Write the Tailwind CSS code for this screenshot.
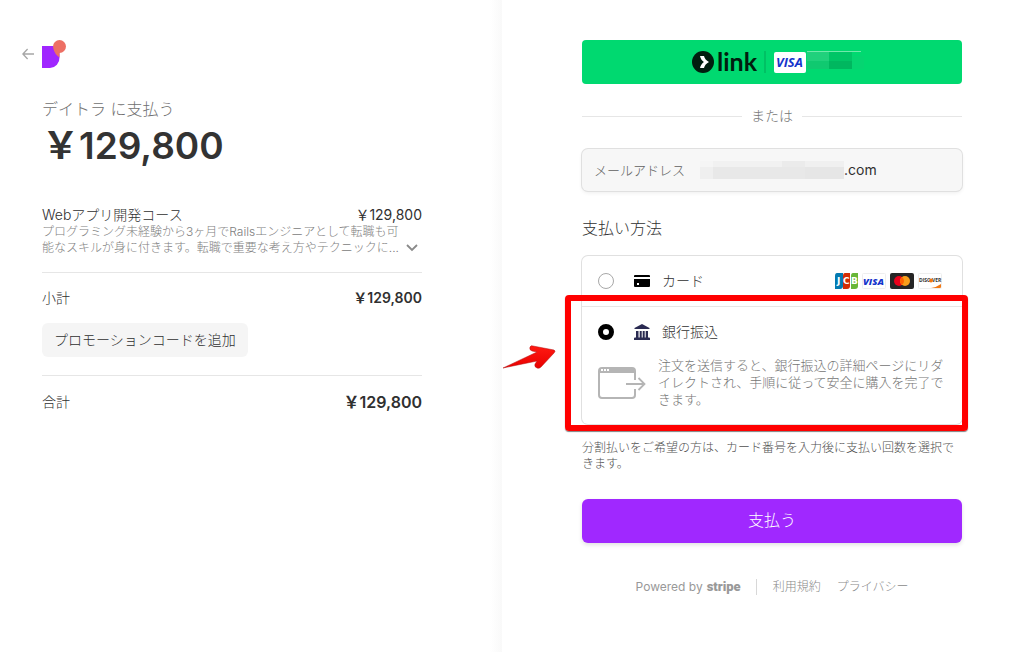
<!DOCTYPE html>
<html lang="ja">
<head>
    <meta charset="UTF-8">
    <meta name="viewport" content="width=device-width, initial-scale=1.0">
    <title>デイトラ に支払う</title>
    <script src="https://cdn.jsdelivr.net/npm/@tailwindcss/browser@4"></script>
</head>
<body class="bg-white font-['Inter','Noto_Sans_CJK_JP',sans-serif] text-[#303030]">
<main class="grid min-h-screen grid-cols-[502fr_515fr]">

    <!-- Order summary -->
    <section class="flex justify-end bg-linear-to-l from-[#f9f9f9] to-white to-[12px] pt-10 pr-20">
        <div class="w-full max-w-[380px]">
            <header class="-ml-5 flex h-7 items-center gap-2">
                <a href="#" aria-label="戻る">
                    <svg class="h-3 w-3" viewBox="0 0 12 12" fill="none" stroke="#a6a6a6" stroke-width="1.3"><path d="M12 6H1M5.6 1L.9 6l4.7 5"/></svg>
                </a>
                <svg class="h-7 w-6" viewBox="0 0 24 28">
                    <path d="M0 6h17.5v11.5A10 10 0 0 1 8 28H0z" fill="#a026ff"/>
                    <circle cx="17.5" cy="6.5" r="6.5" fill="#ed6f64"/>
                    <path d="M11.500 9Q12.500 14 17.500 17.500V12z" fill="#ed6f64"/>
                </svg>
            </header>

            <h1 class="mt-7 text-base leading-[26px] font-light text-[#6f6f6f]">デイトラ に支払う</h1>
            <p class="text-[37px] leading-12 font-semibold text-[#333]">&#65509;129,800</p>

            <div class="mt-[37px] flex justify-between text-sm leading-4">
                <h2 class="font-light">Webアプリ開発コース</h2>
                <span>&#65509;129,800</span>
            </div>
            <div class="mt-px flex items-end justify-between text-xs leading-4 font-light text-[#808080]">
                <p class="w-[358px] whitespace-nowrap">プログラミング未経験から3ヶ月でRailsエンジニアとして転職も可<br>能なスキルが身に付きます。転職で重要な考え方やテクニックに...</p>
                <button type="button" class="flex h-4 w-5 items-center justify-center" aria-label="詳細を表示">
                    <svg class="h-2 w-3" viewBox="0 0 12 8" fill="none" stroke="#8a8a8a" stroke-width="1.800"><path d="M1 1l5 5 5-5"/></svg>
                </button>
            </div>

            <hr class="mt-4 border-[#e6e6e6]">
            <div class="mt-[15px] flex justify-between text-sm leading-5">
                <span class="font-light">小計</span>
                <span class="font-semibold">&#65509;129,800</span>
            </div>
            <button type="button" class="mt-[15px] rounded-md bg-[#f5f5f5] px-3 py-2 text-sm leading-[18px] font-light">プロモーションコードを追加</button>
            <hr class="mt-[18px] border-[#e6e6e6]">
            <div class="mt-4 flex items-center justify-between leading-5">
                <span class="text-sm leading-5 font-light">合計</span>
                <span class="text-base leading-5 font-semibold">&#65509;129,800</span>
            </div>
        </div>
    </section>

    <!-- Payment form -->
    <form class="pt-10 pl-20">
        <div class="w-full max-w-[380px]">
            <button type="button" class="flex h-11 w-full items-center justify-center rounded bg-[#00d970]" aria-label="link で支払う">
                <svg class="ml-3 h-10 w-[172px]" viewBox="0 -9 172 40">
                    <circle cx="11" cy="11" r="11" fill="#011e0f"/>
                    <path d="M8 5h4c.6 2.600 2.300 4.600 5 6-2.700 1.400-4.400 3.400-5 6H8c.5-2.500 1.800-4.500 3.900-6C9.800 9.500 8.500 7.500 8 5z" fill="#fff"/>
                    <text x="25" y="20" font-family="Lato" font-weight="700" font-size="25" fill="#011e0f">link</text>
                    <path d="M73 0v22" stroke="#00c164" stroke-width="2"/>
                    <rect x="82" y="1" width="32" height="21" rx="2" fill="#fff"/>
                    <text x="84" y="16" font-family="Open Sans" font-weight="700" font-style="italic" font-size="13" fill="#1434cb">VISA</text>
                    <path d="M115 1h23v9h-23z" fill="#20d17c"/><path d="M115 10h22v8h-22z" fill="#10c970"/>
                    <path d="M137 1h23v9h-23z" fill="#00c566"/><path d="M137 10h23v8h-23z" fill="#00b75f"/>
                    <path d="M160 5h12v13h-12z" fill="#05d571"/><path d="M115 .5h54" stroke="#70e8ab"/>
                </svg>
            </button>

            <div class="mt-5 flex items-center gap-[9px] text-sm leading-6 font-light text-[#757575]">
                <hr class="flex-1 border-[#e6e6e6]">または<hr class="flex-1 border-[#e6e6e6]">
            </div>

            <div class="mt-[21px] flex h-[42px] items-center rounded-md bg-[#f7f7f7] px-3 shadow-[0_0_0_1px_#e0e0e0,0_2px_4px_rgba(0,0,0,0.07)]">
                <label for="email" class="w-[106px] text-[13px] leading-5 font-light text-[#606060]">メールアドレス</label>
                <svg class="h-[18px] w-36" viewBox="0 0 144 18">
                    <path d="M0 0h13v6H0z" fill="#f5f5f5"/><path d="M0 6h13v12H0z" fill="#efefef"/>
                    <path d="M13 0h69v6H13z" fill="#f1f1f1"/><path d="M82 0h23v6H82z" fill="#ebebeb"/><path d="M105 0h39v6h-39z" fill="#f0f0f0"/>
                    <path d="M13 6h92v12H13z" fill="#e8e8e8"/><path d="M105 6h39v12h-39z" fill="#e6e6e6"/>
                </svg>
                <input id="email" type="text" value=".com" class="min-w-0 flex-1 bg-transparent text-sm leading-5">
            </div>

            <h2 class="mt-[25px] text-base leading-6 font-light">支払い方法</h2>

            <div class="relative mt-4 rounded-md shadow-[0_0_0_1px_#e0e0e0]">
                <div class="flex h-[50px] items-center px-4">
                    <input id="card" type="radio" name="method" class="h-4 w-4 appearance-none rounded-full border border-[#a8a8a8] checked:border-[5px] checked:border-black">
                    <label for="card" class="ml-5 flex flex-1 items-center gap-3 text-sm leading-5 font-light">
                        <svg class="h-3 w-4" viewBox="0 0 16 12"><path d="M1 0h14q1 0 1 1v1H0V1q0-1 1-1zM0 4h16v7q0 1-1 1H1q-1 0-1-1z"/><path d="M3 8h2v2H3z" fill="#fff"/></svg>
                        カード
                    </label>
                    <svg class="mr-1 h-4 w-[107px]" viewBox="0 0 107 16">
                        <path d="M2 0h6v13q0 3-3 3H0V3q0-3 2-3z" fill="#047ab1"/>
                        <path d="M10 0h5v13q0 3-3 3H8V3q0-3 2-3z" fill="#d42d06"/>
                        <path d="M18 0h5v13q0 3-3 3h-4V3q0-3 2-3z" fill="#67b637"/>
                        <g font-family="DejaVu Sans" font-weight="700" font-size="9" fill="#fff"><text x="2" y="11">J</text><text x="8" y="11">C</text><text x="16" y="11">B</text></g>
                        <rect x="27.500" y=".5" width="23" height="15" rx="1" fill="#fff" stroke="#eee"/>
                        <text x="28" y="11.500" font-family="Open Sans" font-weight="800" font-style="italic" font-size="9.500" fill="#1434cb">VISA</text>
                        <rect x="55" width="24" height="16" rx="2" fill="#252525"/>
                        <circle cx="64" cy="8" r="5" fill="#eb001b"/><circle cx="70" cy="8" r="5" fill="#f79e1b"/>
                        <path d="M67 4a5 5 0 0 1 0 8 5 5 0 0 1 0-8z" fill="#ff5f00"/>
                        <rect x="83.500" y=".5" width="23" height="15" rx="1" fill="#fff" stroke="#eee"/>
                        <path d="M106 11v3q0 1-1 1h-9q6-1 10-4z" fill="#f27712"/>
                        <g font-family="Open Sans" font-weight="700" font-size="5" fill="#333"><text x="84" y="9">DISC</text><text x="97" y="9">VER</text></g>
                        <circle cx="96" cy="7.500" r="2" fill="#f27712"/>
                    </svg>
                </div>
                <div class="border-t border-[#e6e6e6] px-4 pt-[15px] pb-4">
                    <div class="flex h-5 items-center">
                        <input id="bank" type="radio" name="method" checked class="h-4 w-4 appearance-none rounded-full border border-[#a8a8a8] checked:border-[5px] checked:border-black">
                        <label for="bank" class="ml-5 flex flex-1 items-center gap-3 text-sm leading-5 font-light">
                            <svg class="h-4 w-4" viewBox="0 0 16 16" fill="#2a2b52"><path d="M8 0l7.500 4Q16 5 15 5H1Q0 5 .5 4zM2 7h2.500v7H2zM5.700 7h2v7h-2zM8.700 7h2v7h-2zM11.700 7H14v7h-2.300zM1 13.500h14q1 0 1 1V16H0v-1.500q0-1 1-1z"/></svg>
                            銀行振込
                        </label>
                    </div>
                    <div class="mt-[15px] flex items-center gap-3">
                        <svg class="h-8 w-12 shrink-0" viewBox="0 0 48 32" fill="none" stroke="#b5b5b5" stroke-width="2">
                            <path d="M37 13V4q0-3-3-3H4Q1 1 1 4v24q0 3 3 3h30q3 0 3-3v-6"/>
                            <path d="M2 3.500h34" stroke-width="5"/><path d="M3 3h8" stroke="#fff" stroke-dasharray="2 1"/>
                            <path d="M28 17h18M40.500 11l6 6-6 6" stroke-width="1.800"/>
                        </svg>
                        <p class="flex-1 text-[13px] leading-[17px] font-light text-[#757575]">注文を送信すると、銀行振込の詳細ページにリダイレクトされ、手順に従って安全に購入を完了できます。</p>
                    </div>
                </div>

                <!-- Highlight frame and pointer over the bank transfer option -->
                <div class="pointer-events-none absolute top-[39px] -right-1.5 -bottom-[7px] -left-[17px] rounded-sm border-[6px] border-[#ff0000] shadow-[0_1px_1px_rgba(0,0,0,0.5)]"></div>
                <svg class="pointer-events-none absolute top-[88px] -left-20 h-7 w-14" viewBox="0 0 56 28">
                    <defs><linearGradient id="red" x2="0" y2="1"><stop offset="0" stop-color="#ff1a12"/><stop offset="1" stop-color="#e90000"/></linearGradient></defs>
                    <path d="M1 24L35 8l-5-1q-3-1-2-4 1-2 3-1l21 4q2 1 0 3L39 23q-2 2-4 1-3-1-2-4l2-3z" fill="url(#red)" stroke="#b01010" stroke-width=".5"/>
                </svg>
            </div>

            <p class="mt-4 text-xs leading-4 font-light text-[#505050]">分割払いをご希望の方は、カード番号を入力後に支払い回数を選択できます。</p>

            <button type="submit" class="mt-[27px] h-11 w-full rounded-md bg-[#a028ff] pb-0.5 text-base leading-6 font-light text-white shadow-[0_2px_4px_rgba(0,0,0,0.12)]">支払う</button>

            <footer class="mt-9 flex h-4 items-center justify-center text-xs leading-4 font-light text-[#8a8a8a]">
                <a href="#" class="flex items-center gap-1 border-r border-[#d8d8d8] pr-[15px] font-normal text-[#999]">Powered by <span class="font-['Roboto',sans-serif] text-[13px] leading-4 font-black">stripe</span></a>
                <a href="#" class="ml-4">利用規約</a>
                <a href="#" class="ml-4">プライバシー</a>
            </footer>
        </div>
    </form>
</main>
</body>
</html>
